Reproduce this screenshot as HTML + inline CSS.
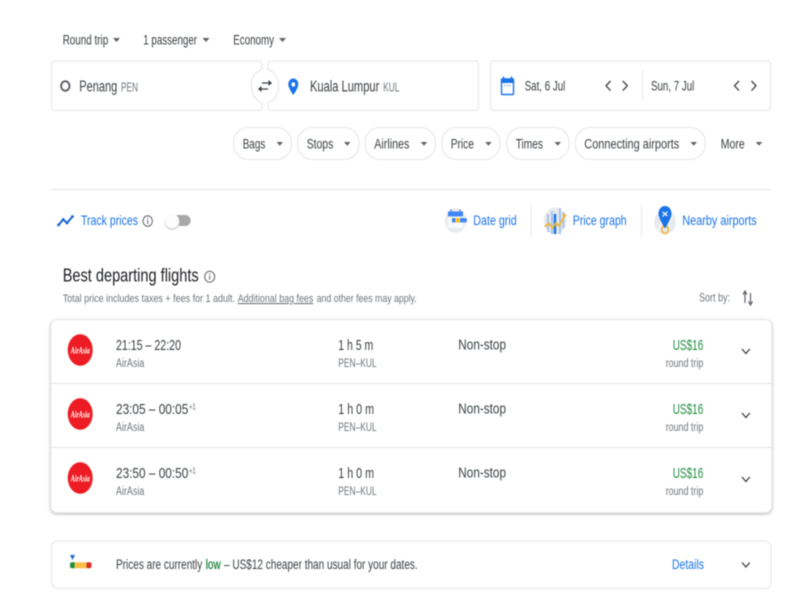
<!DOCTYPE html>
<html lang="en">
<head>
<meta charset="utf-8">
<title>Flights</title>
<style>
html,body{margin:0;padding:0;background:#fff;width:800px;height:600px;overflow:hidden}
svg{display:block;filter:blur(.4px)}
text{font-family:"Liberation Sans",sans-serif;fill:#3c4043;font-size:13.5px}
.g{fill:#70757a}
.b{fill:#1a73e8}
.box{fill:#fff;stroke:#e3e5e8;stroke-width:1}
.ar{fill:#5f6368}
.ch{fill:none;stroke:#3c4043;stroke-width:1.300}
.s10{font-size:11.500px}
.s11{font-size:11px}
.s13{font-size:15px}
.s14{font-size:15.500px}
.logo{font-size:9.500px;fill:#fff;font-weight:bold;font-style:italic;font-family:"Liberation Serif",serif}
.sup{font-size:8.500px;fill:#5f6368}
</style>
</head>
<body>
<svg width="800" height="600" viewBox="0 0 800 600" xmlns="http://www.w3.org/2000/svg">
<rect width="800" height="600" fill="#fff"/>

<!-- top selectors -->
<text x="62.700" y="44.500" textLength="45.500" lengthAdjust="spacingAndGlyphs">Round trip</text>
<path class="ar" d="M113 38h7l-3.500 4z"/>
<text x="143.300" y="44.500" textLength="53.700" lengthAdjust="spacingAndGlyphs">1 passenger</text>
<path class="ar" d="M202.500 38h7l-3.500 4z"/>
<text x="233.300" y="44.500" textLength="40.700" lengthAdjust="spacingAndGlyphs">Economy</text>
<path class="ar" d="M279 38h7l-3.500 4z"/>

<!-- origin / destination -->
<rect class="box" x="51.500" y="61" width="210.500" height="49.500" rx="3"/>
<rect class="box" x="268" y="61" width="210.500" height="49.500" rx="3"/>
<ellipse cx="265" cy="86" rx="13.800" ry="17" fill="#fff" stroke="#e3e5e8"/>
<rect x="262.600" y="60" width="4.800" height="10.500" fill="#fff"/>
<rect x="262.600" y="101.500" width="4.800" height="10" fill="#fff"/>
<path d="M262 83h7M268 89h-7" fill="none" stroke="#3c4043" stroke-width="1.300"/>
<path d="M268.500 80l3.500 3-3.500 3zM261.500 86l-3.500 3 3.500 3z" fill="#3c4043"/>
<ellipse cx="65.300" cy="86" rx="4.200" ry="4.800" fill="none" stroke="#5f6368" stroke-width="2"/>
<text class="s14" x="79.300" y="91.500" textLength="38" lengthAdjust="spacingAndGlyphs">Penang</text>
<text class="g" style="font-size:12.500px" x="121" y="91.500" textLength="17" lengthAdjust="spacingAndGlyphs">PEN</text>
<path fill-rule="evenodd" d="M293.300 78.500c-2.800 0-5 2.500-5 5.800 0 4 5 10.700 5 10.700s5-6.700 5-10.700c0-3.300-2.200-5.800-5-5.800zm0 3.800a1.900 2.200 0 1 1 0 4.400a1.900 2.200 0 1 1 0-4.400z" fill="#1a73e8"/>
<text class="s14" x="310" y="91.500" textLength="69.300" lengthAdjust="spacingAndGlyphs">Kuala Lumpur</text>
<text class="g" style="font-size:12.500px" x="383.300" y="91.500" textLength="16" lengthAdjust="spacingAndGlyphs">KUL</text>

<!-- dates -->
<rect class="box" x="490.500" y="61" width="280" height="49.500" rx="3"/>
<rect x="501.500" y="79" width="12" height="15.500" rx="1" fill="#fff" stroke="#1a73e8" stroke-width="1.400"/>
<path d="M501 78.500h13v4.500h-13z" fill="#1a73e8"/>
<path d="M503.500 76.500v3M511.500 76.500v3" stroke="#1a73e8" stroke-width="1.500"/>
<path d="M504.500 85.500h1M507 85.500h1M509.500 85.500h1" stroke="#1a73e8"/>
<text x="524.700" y="90.700" textLength="40.600" lengthAdjust="spacingAndGlyphs">Sat, 6 Jul</text>
<path class="ch" d="M610.500 81l-4.500 4.800 4.500 4.800M622.800 81l4.500 4.800-4.500 4.800"/>
<path d="M642.500 70v31" stroke="#e8eaed"/>
<text x="651" y="90.700" textLength="43.300" lengthAdjust="spacingAndGlyphs">Sun, 7 Jul</text>
<path class="ch" d="M739 81l-4.500 4.800 4.500 4.800M751.500 81l4.500 4.800-4.500 4.800"/>

<!-- chips -->
<rect class="box" x="233.500" y="127.500" width="58" height="32" rx="15"/>
<text x="242.700" y="148.300" textLength="22.600" lengthAdjust="spacingAndGlyphs">Bags</text>
<path class="ar" d="M276.500 142h6.500l-3.250 3.800z"/>
<rect class="box" x="297.500" y="127.500" width="61.500" height="32" rx="15"/>
<text x="306.700" y="148.300" textLength="26.600" lengthAdjust="spacingAndGlyphs">Stops</text>
<path class="ar" d="M344 142h6.500l-3.250 3.800z"/>
<rect class="box" x="365" y="127.500" width="70.500" height="32" rx="15"/>
<text x="374.300" y="148.300" textLength="35" lengthAdjust="spacingAndGlyphs">Airlines</text>
<path class="ar" d="M420.700 142h6.500l-3.250 3.800z"/>
<rect class="box" x="441.700" y="127.500" width="58.300" height="32" rx="15"/>
<text x="450.700" y="148.300" textLength="23.300" lengthAdjust="spacingAndGlyphs">Price</text>
<path class="ar" d="M485.200 142h6.500l-3.250 3.800z"/>
<rect class="box" x="506.700" y="127.500" width="62.300" height="32" rx="15"/>
<text x="515.700" y="148.300" textLength="27.300" lengthAdjust="spacingAndGlyphs">Times</text>
<path class="ar" d="M554.500 142h6.500l-3.250 3.800z"/>
<rect class="box" x="575.300" y="127.500" width="130" height="32" rx="15"/>
<text x="584.300" y="148.300" textLength="95" lengthAdjust="spacingAndGlyphs">Connecting airports</text>
<path class="ar" d="M690.500 142h6.500l-3.250 3.800z"/>
<text x="720.700" y="148.300" textLength="24" lengthAdjust="spacingAndGlyphs">More</text>
<path class="ar" d="M755.800 142h6.500l-3.250 3.800z"/>

<path d="M51 189.500h720" stroke="#e0e2e5"/>

<!-- track prices -->
<path d="M58.500 225l4.700-5.500 3.800 3.500 5.500-6.500" fill="none" stroke="#1967d2" stroke-width="2"/>
<circle cx="58.500" cy="225" r="1.400" fill="#1967d2"/><circle cx="63.200" cy="219.500" r="1.400" fill="#1967d2"/><circle cx="67" cy="223" r="1.400" fill="#1967d2"/><circle cx="72.500" cy="216.500" r="1.400" fill="#1967d2"/>
<text class="b" x="81" y="225" textLength="57" lengthAdjust="spacingAndGlyphs">Track prices</text>
<ellipse cx="147.700" cy="221" rx="4.700" ry="5.300" fill="none" stroke="#5f6368"/>
<path d="M147.700 220v4M147.700 217.800v1.200" stroke="#5f6368"/>
<rect x="168" y="215" width="22.700" height="11" rx="5.500" fill="#a8a8a8"/>
<ellipse cx="172" cy="222.300" rx="7.500" ry="7.700" fill="#d4d5d7"/>
<ellipse cx="172" cy="221" rx="7" ry="7.400" fill="#fdfdfd"/>

<!-- tool links -->
<ellipse cx="455.500" cy="220.500" rx="10.500" ry="12.500" fill="#e8eaed"/>
<rect x="448" y="214" width="15" height="14" fill="#f8f9fa"/>
<path d="M448 211.500h15v5h-15z" fill="#4285f4"/>
<path d="M451 209.500v3M460 209.500v3" stroke="#4285f4" stroke-width="1.400"/>
<rect x="452" y="218" width="3.500" height="4.500" fill="#4285f4"/>
<rect x="456" y="218" width="3.500" height="4.500" fill="#fbbc04"/>
<rect x="460" y="218" width="3.500" height="4.500" fill="#4285f4"/>
<rect x="463" y="218" width="4" height="4.500" rx="2" fill="#4285f4"/>
<text class="b" x="473.300" y="225" textLength="43.400" lengthAdjust="spacingAndGlyphs">Date grid</text>
<path d="M531 204v33" stroke="#e8eaed"/>

<ellipse cx="555" cy="221" rx="11" ry="13.500" fill="#e8eaed"/>
<path d="M548 214v18M552 211v23M560 208v26M563.500 212v16" stroke="#a5c4ef" stroke-width="2"/>
<path d="M555 214v20" stroke="#1a73e8" stroke-width="2.500"/>
<path d="M544.500 226.500l4.500-3 3.500 4.500 3.500-5 3 3 5-9" fill="none" stroke="#f2b632" stroke-width="1.800"/>
<circle cx="564.500" cy="215.500" r="1.700" fill="#f2b632"/>
<text class="b" x="572.700" y="225" textLength="54" lengthAdjust="spacingAndGlyphs">Price graph</text>
<path d="M641.500 204v33" stroke="#e8eaed"/>

<ellipse cx="665" cy="222" rx="10.800" ry="12.500" fill="#e8eaed"/>
<path d="M657 232l5-10M673 217l-6 8" stroke="#fff"/>
<ellipse cx="665" cy="229.500" rx="3.300" ry="3.800" fill="none" stroke="#f2b632" stroke-width="1.600"/>
<path d="M665 206c-4 0-6.500 3.500-6.500 7.500 0 5 6.500 15 6.500 15s6.500-10 6.500-15c0-4-2.500-7.500-6.500-7.500z" fill="#1a73e8"/>
<path d="M662.500 216.500l5-5M662.500 212l5 4" stroke="#fff" stroke-width="1.200"/>
<text class="b" x="682.300" y="225" textLength="74.400" lengthAdjust="spacingAndGlyphs">Nearby airports</text>

<!-- heading -->
<text x="62.700" y="281.700" style="font-size:18px;fill:#202124" textLength="136" lengthAdjust="spacingAndGlyphs">Best departing flights</text>
<ellipse cx="209.700" cy="276.700" rx="5" ry="5.500" fill="none" stroke="#5f6368"/>
<path d="M209.700 275.700v4M209.700 273.500v1.200" stroke="#5f6368"/>
<text class="g s11" x="62.700" y="302" textLength="172.300" lengthAdjust="spacingAndGlyphs">Total price includes taxes + fees for 1 adult.</text>
<text class="g s11" style="text-decoration:underline" x="237.700" y="302" textLength="75.600" lengthAdjust="spacingAndGlyphs">Additional bag fees</text>
<text class="g s11" x="316.700" y="302" textLength="100" lengthAdjust="spacingAndGlyphs">and other fees may apply.</text>
<text class="g" style="font-size:12px" x="699" y="301.700" textLength="31" lengthAdjust="spacingAndGlyphs">Sort by:</text>
<path d="M745 303v-11M743 294.500l2-3.500 2 3.500M750.500 293v11M748.500 301.500l2 3.500 2-3.500" fill="none" stroke="#5f6368" stroke-width="1.200"/>

<!-- results card -->
<rect x="51" y="320" width="720.500" height="192.500" rx="6" fill="#fff" stroke="#eceded" style="filter:drop-shadow(0 1px 1.500px rgba(60,64,67,.4))"/>
<path d="M51 383.500h720.500M51 447.500h720.500" stroke="#e0e2e5"/>

<!-- row 1 -->
<ellipse cx="80.200" cy="350" rx="12.500" ry="15.800" fill="#ed1c24"/>
<text class="logo" x="70.800" y="353.500" textLength="19" lengthAdjust="spacingAndGlyphs">AirAsia</text>
<text class="s13" x="116" y="350" textLength="65" lengthAdjust="spacingAndGlyphs">21:15 – 22:20</text>
<text class="g s10" x="116" y="367.200" textLength="28.300" lengthAdjust="spacingAndGlyphs">AirAsia</text>
<text class="s13" x="338.300" y="350" textLength="35" lengthAdjust="spacingAndGlyphs">1 h 5 m</text>
<text class="g s10" x="338.300" y="367.200" textLength="38.400" lengthAdjust="spacingAndGlyphs">PEN–KUL</text>
<text class="s13" x="458.300" y="349.500" textLength="47.700" lengthAdjust="spacingAndGlyphs">Non-stop</text>
<text class="s13" style="fill:#1e8e3e" x="672.700" y="350" textLength="30.600" lengthAdjust="spacingAndGlyphs">US$16</text>
<text class="g s10" x="665.700" y="367.200" textLength="37.600" lengthAdjust="spacingAndGlyphs">round trip</text>
<path class="ch" d="M742 349l3.900 4.500 3.900-4.500"/>

<!-- row 2 -->
<ellipse cx="80.200" cy="414" rx="12.500" ry="15.800" fill="#ed1c24"/>
<text class="logo" x="70.800" y="417.500" textLength="19" lengthAdjust="spacingAndGlyphs">AirAsia</text>
<text class="s13" x="116" y="414" textLength="72.300" lengthAdjust="spacingAndGlyphs">23:05 – 00:05</text>
<text class="sup" x="189" y="409.500" textLength="6.700" lengthAdjust="spacingAndGlyphs">+1</text>
<text class="g s10" x="116" y="431.200" textLength="28.300" lengthAdjust="spacingAndGlyphs">AirAsia</text>
<text class="s13" x="338.300" y="414" textLength="35.700" lengthAdjust="spacingAndGlyphs">1 h 0 m</text>
<text class="g s10" x="338.300" y="431.200" textLength="38.400" lengthAdjust="spacingAndGlyphs">PEN–KUL</text>
<text class="s13" x="458.300" y="413.500" textLength="47.700" lengthAdjust="spacingAndGlyphs">Non-stop</text>
<text class="s13" style="fill:#1e8e3e" x="672.700" y="414" textLength="30.600" lengthAdjust="spacingAndGlyphs">US$16</text>
<text class="g s10" x="665.700" y="431.200" textLength="37.600" lengthAdjust="spacingAndGlyphs">round trip</text>
<path class="ch" d="M742 413l3.900 4.500 3.900-4.500"/>

<!-- row 3 -->
<ellipse cx="80.200" cy="478" rx="12.500" ry="15.800" fill="#ed1c24"/>
<text class="logo" x="70.800" y="481.500" textLength="19" lengthAdjust="spacingAndGlyphs">AirAsia</text>
<text class="s13" x="116" y="478" textLength="72.300" lengthAdjust="spacingAndGlyphs">23:50 – 00:50</text>
<text class="sup" x="189" y="473.500" textLength="6.700" lengthAdjust="spacingAndGlyphs">+1</text>
<text class="g s10" x="116" y="495.200" textLength="28.300" lengthAdjust="spacingAndGlyphs">AirAsia</text>
<text class="s13" x="338.300" y="478" textLength="35.700" lengthAdjust="spacingAndGlyphs">1 h 0 m</text>
<text class="g s10" x="338.300" y="495.200" textLength="38.400" lengthAdjust="spacingAndGlyphs">PEN–KUL</text>
<text class="s13" x="458.300" y="477.500" textLength="47.700" lengthAdjust="spacingAndGlyphs">Non-stop</text>
<text class="s13" style="fill:#1e8e3e" x="672.700" y="478" textLength="30.600" lengthAdjust="spacingAndGlyphs">US$16</text>
<text class="g s10" x="665.700" y="495.200" textLength="37.600" lengthAdjust="spacingAndGlyphs">round trip</text>
<path class="ch" d="M742 477l3.900 4.500 3.900-4.500"/>

<!-- price insight card -->
<rect class="box" x="51.500" y="541" width="719.500" height="47.500" rx="6"/>
<path d="M70 555h5l-2.500 5z" fill="#1967d2"/>
<rect x="70" y="562.300" width="6" height="6" rx="2" fill="#1e8e3e"/>
<rect x="86" y="562.300" width="5.500" height="6" rx="2" fill="#d93025"/>
<rect x="74.500" y="562.300" width="12" height="6" fill="#fbc04a"/>
<text x="116" y="569" textLength="86.300" lengthAdjust="spacingAndGlyphs">Prices are currently</text>
<text x="205.700" y="569" style="fill:#188038;stroke:#188038;stroke-width:.25" textLength="15" lengthAdjust="spacingAndGlyphs">low</text>
<text x="224" y="569" textLength="193.700" lengthAdjust="spacingAndGlyphs">– US$12 cheaper than usual for your dates.</text>
<text class="b" x="672" y="569" textLength="32" lengthAdjust="spacingAndGlyphs">Details</text>
<path class="ch" d="M742 562.500l3.900 4.500 3.900-4.500"/>
</svg>
</body>
</html>
